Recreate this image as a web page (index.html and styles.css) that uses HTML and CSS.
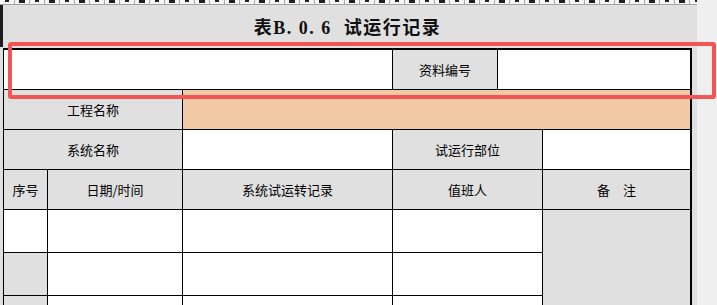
FILE: index.html
```html
<html lang="zh">
<head>
  <meta charset="UTF-8">
  <meta name="viewport" content="width=device-width, initial-scale=1.0">
  <title>试运行记录</title>
  <link rel="stylesheet" href="styles.css">
</head>
<body>
  <div class="window">
    <div class="sheet">
      <div class="ruler">
        <span></span><span></span><span></span><span></span><span></span><span></span><span></span><span></span><span></span><span></span>
        <span></span><span></span><span></span><span></span><span></span><span></span><span></span><span></span><span></span><span></span>
        <span></span><span></span><span></span><span></span><span></span><span></span><span></span><span></span><span></span><span></span>
        <span></span><span></span><span></span><span></span><span></span><span></span><span></span><span></span><span></span><span></span>
        <span></span><span></span><span></span><span></span><span></span><span></span><span></span>
      </div>

      <div class="page">
        <div class="gutter">
          <div class="freeze"></div>
        </div>
        <div class="form">
          <h1 class="title">表<span class="num">B.&nbsp;0.&nbsp;6</span>&nbsp;&nbsp;试运行记录</h1>

          <div class="record">
            <!-- head -->
            <div class="cell c3"></div>
            <div class="cell gray">资料编号</div>
            <div class="cell c2"></div>

            <div class="cell c2 gray">工程名称</div>
            <div class="cell c4 peach"></div>

            <div class="cell c2 gray">系统名称</div>
            <div class="cell"></div>
            <div class="cell c2 gray">试运行部位</div>
            <div class="cell"></div>

            <div class="cell gray">序号</div>
            <div class="cell gray">日期/时间</div>
            <div class="cell gray">系统试运转记录</div>
            <div class="cell c2 gray">值班人</div>
            <div class="cell gray">备　注</div>

            <!-- rows -->
            <div class="cell"></div>
            <div class="cell"></div>
            <div class="cell"></div>
            <div class="cell c2"></div>
            <div class="cell gray note"></div>

            <div class="cell gray"></div>
            <div class="cell"></div>
            <div class="cell"></div>
            <div class="cell c2"></div>

            <div class="cell gray"></div>
            <div class="cell"></div>
            <div class="cell"></div>
            <div class="cell c2"></div>
          </div>
        </div>
      </div>

      <div class="marker"></div>
    </div>
    <div class="scrollbar"></div>
  </div>
</body>
</html>
```

FILE: styles.css
```css
body, html {
  margin: 0;
  padding: 0;
}
body {
  height: 305px;
  overflow: hidden;
  background-color: #e0e0e0;
  font-family: "Noto Sans CJK SC", "Noto Sans", sans-serif;
  color: #000;
}
.window {
  display: flex;
  height: 305px;
}
.sheet {
  position: relative;
  width: 697px;
  flex: none;
  background-color: #e0e0e0;
}
.scrollbar {
  flex: 1;
  background-color: #efefef;
}

/* column ruler along the top, only its lower edge is in view */
.ruler {
  display: flex;
  height: 4px;
  overflow: hidden;
  border-bottom: 1px solid #a4a4a4;
  background-color: #f6f6f6;
}
.ruler span {
  flex: none;
  display: flex;
  justify-content: center;
  box-sizing: border-box;
  width: 15px;
  border-right: 1px solid #a8a8a8;
}
.ruler span::before {
  content: "";
  width: 4px;
  height: 2px;
  background-color: #222;
}
.ruler span:nth-child(2n)::before {
  width: 6px;
  height: 3px;
}

.page {
  display: flex;
}
.gutter {
  width: 3px;
  flex: none;
}
.freeze {
  height: 42px;
  background-color: #1e1e1e;
}
.form {
  flex: none;
}

.title {
  margin: 0;
  height: 43px;
  box-sizing: border-box;
  padding-top: 11px;
  text-align: center;
  font-family: "Liberation Serif", "Noto Sans CJK SC", serif;
  font-size: 18px;
  font-weight: bold;
  line-height: 24px;
  letter-spacing: 1.5px;
  color: #111;
}
.title .num {
  font-family: "Liberation Serif", serif;
}

/* the record form itself: black gaps draw the rules */
.record {
  display: grid;
  grid-template-columns: 43px 134px 209px 104px 44px 147px;
  grid-template-rows: 39px 39px 39px 39px 42px 42px 9px;
  gap: 1px;
  background-color: #000;
  border-top: 2px solid #000;
  border-right: 2px solid #000;
  border-left: 1px solid #000;
}
.cell {
  background-color: #fff;
  display: flex;
  align-items: center;
  justify-content: center;
  font-size: 13px;
}
.c2 { grid-column: span 2; }
.c3 { grid-column: span 3; }
.c4 { grid-column: span 4; }
.gray { background-color: #e0e0e0; }
.peach { background-color: #f1c9a5; }
.note { grid-row: span 3; }

/* highlight frame drawn over the first row */
.marker {
  position: absolute;
  left: 8px;
  top: 42px;
  width: 708px;
  height: 57px;
  box-sizing: border-box;
  border: 4px solid #f35555;
  border-radius: 3px;
}
```
